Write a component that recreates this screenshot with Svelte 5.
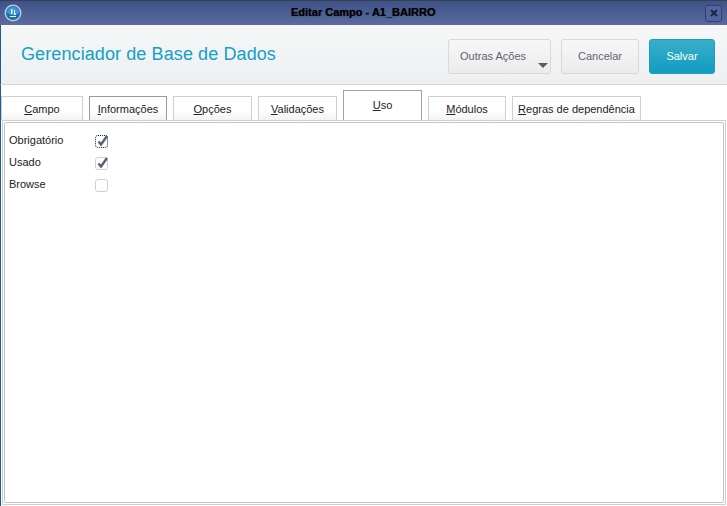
<script lang="ts">
  const tabs = [
    { key: "C", rest: "ampo", width: 82 },
    { key: "I", rest: "nformações", width: 78, focused: true },
    { key: "O", rest: "pções", width: 79 },
    { key: "V", rest: "alidações", width: 79 },
    { key: "U", rest: "so", width: 79, active: true },
    { key: "M", rest: "ódulos", width: 78 },
    { key: "R", rest: "egras de dependência", width: 129 },
  ];

  const fields = [
    { label: "Obrigatório", checked: true, focused: true },
    { label: "Usado", checked: true },
    { label: "Browse", checked: false },
  ];
</script>

<div class="window">
  <div class="titlebar">
    <svg class="logo" width="18" height="18" viewBox="0 0 18 18">
      <circle cx="9" cy="9" r="8.5" fill="#b9c8dc" />
      <circle cx="9" cy="9" r="7" fill="#1b6fb4" />
      <path d="M3 8a6 5 0 0 1 12 0a6 3 0 0 1-12 0z" fill="#3f97d2" />
      <path d="M7 5v5h1.500V5zM10 6v5h2V9.500h-1V6zM6 12h6v1H6z" fill="#e6f1f8" />
    </svg>
    <span class="title">Editar Campo - A1_BAIRRO</span>
    <button class="close" type="button" aria-label="Fechar">
      <svg width="8" height="8" viewBox="0 0 8 8">
        <path d="M1 1l6 6M7 1l-6 6" stroke="#20263a" stroke-width="2" />
      </svg>
    </button>
  </div>

  <div class="header">
    <h1>Gerenciador de Base de Dados</h1>
    <div class="actions">
      <button class="btn more" type="button">
        Outras Ações
        <span class="caret"></span>
      </button>
      <button class="btn cancel" type="button">Cancelar</button>
      <button class="btn save" type="button">Salvar</button>
    </div>
  </div>

  <div class="content">
    <div class="tabs">
      {#each tabs as tab}
        <div
          class="tab"
          class:focused={tab.focused}
          class:active={tab.active}
          style="width: {tab.width}px"
        >
          <span><u>{tab.key}</u>{tab.rest}</span>
        </div>
      {/each}
    </div>
    <div class="frame">
      <div class="panel">
        {#each fields as field}
          <div class="row">
            <span class="label">{field.label}</span>
            <span class="check" class:focused={field.focused}>
              {#if field.checked}
                <svg width="14" height="14" viewBox="0 0 14 14">
                  <path d="M2.500 7.500l2.500 3L11 2" fill="none" stroke="#566176" stroke-width="2.400" />
                </svg>
              {/if}
            </span>
          </div>
        {/each}
      </div>
    </div>
  </div>
</div>

<style>
  :global(body) {
    margin: 0;
    background: #fff;
  }
  .window {
    width: 727px;
    height: 506px;
    display: flex;
    flex-direction: column;
    font-family: "Liberation Sans", Arial, sans-serif;
    font-size: 11px;
    color: #333;
    box-sizing: border-box;
    overflow: hidden;
  }
  .titlebar {
    flex: 0 0 25px;
    box-sizing: border-box;
    border-top: 1px solid #3a3f50;
    background: linear-gradient(#3f5288, #5a6c9e);
    display: flex;
    align-items: center;
    position: relative;
    padding: 0 5px 0 4px;
  }
  .logo {
    flex-shrink: 0;
  }
  .title {
    position: absolute;
    left: 291px;
    top: 5px;
    font-weight: bold;
    color: #000;
    font-size: 11px;
    text-shadow: 0 0 1px #1a1f30;
  }
  .close {
    margin-left: auto;
    width: 17px;
    height: 17px;
    padding: 0;
    border: 1px solid #2f3f70;
    border-radius: 3px;
    background: #5265a0;
    display: flex;
    align-items: center;
    justify-content: center;
  }
  .header {
    flex: 0 0 60px;
    box-sizing: border-box;
    border-left: 1px solid #1c5c9c;
    border-bottom: 1px solid #d6d8da;
    background: linear-gradient(#f6f7f7, #eeeff1);
    display: flex;
    align-items: center;
    justify-content: space-between;
    padding: 4px 12px 0 20px;
  }
  h1 {
    margin: 0 0 4px;
    font-size: 18px;
    font-weight: normal;
    color: #12a1c7;
    letter-spacing: 0.1px;
  }
  .actions {
    display: flex;
    gap: 10px;
    margin-bottom: 1px;
  }
  .btn {
    height: 35px;
    border-radius: 3px;
    border: 1px solid #d8d8d8;
    background: linear-gradient(#f7f7f7, #ececec);
    color: #5d6570;
    font: inherit;
    padding: 0;
    position: relative;
  }
  .more {
    width: 103px;
    text-align: left;
    padding-left: 11px;
  }
  .cancel {
    width: 78px;
  }
  .save {
    width: 66px;
    border: 1px solid #1a9fc0;
    background: linear-gradient(#3aaecb, #119cc0);
    color: #fff;
  }
  .caret {
    position: absolute;
    right: 2px;
    bottom: 5px;
    width: 0;
    height: 0;
    border-left: 5px solid transparent;
    border-right: 5px solid transparent;
    border-top: 5px solid #555d6b;
  }
  .content {
    flex: 1;
    min-height: 0;
    display: flex;
    flex-direction: column;
    border-left: 1px solid #1c5c9c;
    padding-top: 5px;
    padding-bottom: 1px;
  }
  .tabs {
    flex: 0 0 30px;
    display: flex;
    align-items: flex-end;
    gap: 6px;
  }
  .tab {
    height: 24px;
    box-sizing: border-box;
    border: 1px solid #cfcfcf;
    border-bottom: none;
    background: linear-gradient(#fff 55%, #f3f3f3);
    display: flex;
    align-items: center;
    justify-content: center;
    color: #222;
    padding-top: 1px;
  }
  .tab.focused {
    border-color: #9a9a9a;
  }
  .tab.active {
    height: 30px;
    border-color: #a0a0a0;
    background: #fff;
    padding-top: 0;
    padding-bottom: 2px;
  }
  .frame {
    flex: 1;
    min-height: 0;
    margin: 0 1px;
    box-sizing: border-box;
    border: 1px solid #cfcfcf;
    padding: 1px;
    display: flex;
  }
  .panel {
    flex: 1;
    box-sizing: border-box;
    border: 1px solid #c4c4c4;
    border-radius: 2px;
    background: #fff;
    padding: 9px 0 0 4px;
    display: flex;
    flex-direction: column;
    gap: 6px;
  }
  .row {
    height: 16px;
    display: flex;
    align-items: center;
  }
  .label {
    width: 86px;
    color: #222;
  }
  .check {
    width: 11px;
    height: 11px;
    margin-top: 2px;
    border: 1px solid #cfcfcf;
    border-radius: 3px;
    background: #fff;
    position: relative;
    display: block;
  }
  .check svg {
    position: absolute;
    left: 0;
    top: -2px;
  }
  .check.focused {
    border: 1px dotted #222;
  }
</style>
